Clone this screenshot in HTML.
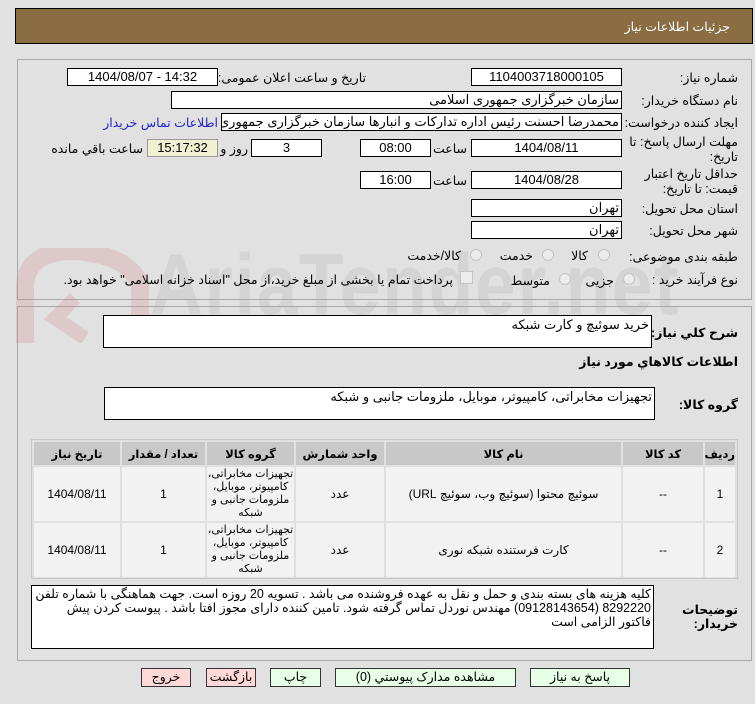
<!DOCTYPE html>
<html><head><meta charset="utf-8"><style>
body{margin:0;width:755px;height:704px;background:#e1e1e1;font-family:"Liberation Sans","DejaVu Sans",sans-serif;font-size:12px;position:relative;overflow:hidden;color:#000}
.a{position:absolute}
.hdr{left:15px;top:8px;width:736px;height:34px;background:#8b6d43;border:1px solid #000;}
.hdr span{position:absolute;right:22px;top:10px;color:#fff;font-size:12.5px}
.pan{border:1px solid #a8a8a8;background:#e1e1e1}
.f{position:absolute;background:#fff;border:1px solid #000;height:16px;line-height:16px;text-align:center;font-size:13px;box-sizing:content-box;overflow:hidden;white-space:nowrap}
.r{text-align:right;padding-right:2px;direction:rtl}
.lb{position:absolute;right:17px;text-align:right;direction:rtl;font-size:12.5px}
.rad{position:absolute;width:10px;height:10px;border:1px solid #c4c4c4;border-radius:50%;background:#ececec}
.t{position:absolute;direction:rtl;white-space:nowrap;font-size:12.5px}
table{border-collapse:separate;border-spacing:2px;background:#e0e0e0;table-layout:fixed}
td,th{font-size:12px;text-align:center;direction:rtl;overflow:hidden;padding:0}
th{background:#c8c8c8;height:23px;font-weight:bold;font-size:11.5px;white-space:nowrap}
td{background:#f2f2f2;height:54px;line-height:13px}
td.g{font-size:11px;white-space:nowrap;line-height:13px}
.btn{position:absolute;top:668px;height:17px;border:1px solid #333;background:#e8ffe8;text-align:center;line-height:17px;font-size:12.5px}
.wm{position:absolute;left:150px;top:236px;font-size:86px;font-weight:bold;color:rgba(170,170,170,0.22);letter-spacing:2px;transform:scaleX(0.85);transform-origin:left;font-family:"Liberation Sans Narrow","Liberation Sans",sans-serif}
</style></head><body>
<div class="a hdr"><span>جزئیات اطلاعات نیاز</span></div>
<div class="a pan" style="left:17px;top:59px;width:733px;height:239px"></div>
<div class="a pan" style="left:17px;top:306px;width:733px;height:353px"></div>
<div class="wm">AriaTender.net</div>
<svg class="a" style="left:15px;top:248px" width="135" height="95" viewBox="0 0 135 95"><path d="M10 95 L10 40 Q10 5 55 3 Q110 5 125 35 L125 95" fill="none" stroke="rgba(210,130,130,0.25)" stroke-width="18"/><path d="M60 50 L40 70 L70 90" fill="none" stroke="rgba(210,130,130,0.25)" stroke-width="14"/></svg>

<div class="lb" style="top:70px">شماره نیاز:</div>
<div class="f" style="left:471px;top:68px;width:149px">1104003718000105</div>
<div class="t" style="right:389px;top:70px">تاریخ و ساعت اعلان عمومی:</div>
<div class="f" style="left:67px;top:68px;width:149px">1404/08/07 - 14:32</div>

<div class="lb" style="top:93px">نام دستگاه خریدار:</div>
<div class="f r" style="left:171px;top:91px;width:447px">سازمان خبرگزاری جمهوری اسلامی</div>

<div class="lb" style="top:115px">ایجاد کننده درخواست:</div>
<div class="f r" style="left:221px;top:113px;width:397px">محمدرضا احسنت رئیس اداره تدارکات و انبارها سازمان خبرگزاری جمهوری اسلامی</div>
<div class="t" style="right:537px;top:115px;color:#2323d0">اطلاعات تماس خریدار</div>

<div class="lb" style="top:135px;line-height:15px">مهلت ارسال پاسخ: تا<br>تاریخ:</div>
<div class="f" style="left:471px;top:139px;width:149px">1404/08/11</div>
<div class="t" style="right:288px;top:141px">ساعت</div>
<div class="f" style="left:360px;top:139px;width:69px">08:00</div>
<div class="f" style="left:251px;top:139px;width:69px">3</div>
<div class="t" style="right:507px;top:141px">روز و</div>
<div class="f" style="left:147px;top:139px;width:69px;background:#f0f0d2;border-color:#999">15:17:32</div>
<div class="t" style="right:612px;top:141px">ساعت باقي مانده</div>

<div class="lb" style="top:167px;line-height:15px">حداقل تاریخ اعتبار<br>قیمت: تا تاریخ:</div>
<div class="f" style="left:471px;top:171px;width:149px">1404/08/28</div>
<div class="t" style="right:288px;top:173px">ساعت</div>
<div class="f" style="left:360px;top:171px;width:69px">16:00</div>

<div class="lb" style="top:201px">استان محل تحویل:</div>
<div class="f r" style="left:471px;top:199px;width:147px">تهران</div>
<div class="lb" style="top:223px">شهر محل تحویل:</div>
<div class="f r" style="left:471px;top:221px;width:147px">تهران</div>

<div class="lb" style="top:249px">طبقه بندی موضوعی:</div>
<div class="rad" style="left:598px;top:249px"></div><div class="t" style="right:167px;top:248px">کالا</div>
<div class="rad" style="left:542px;top:249px"></div><div class="t" style="right:222px;top:248px">خدمت</div>
<div class="rad" style="left:470px;top:249px"></div><div class="t" style="right:294px;top:248px">کالا/خدمت</div>

<div class="lb" style="top:272px">نوع فرآیند خرید :</div>
<div class="rad" style="left:623px;top:273px"></div><div class="t" style="right:141px;top:273px">جزیی</div>
<div class="rad" style="left:559px;top:273px"></div><div class="t" style="right:205px;top:273px">متوسط</div>
<div class="a" style="left:460px;top:271px;width:11px;height:11px;border:1px solid #c4c4c4;background:#ececec"></div>
<div class="t" style="right:302px;top:272px">پرداخت تمام یا بخشی از مبلغ خرید،از محل "اسناد خزانه اسلامی" خواهد بود.</div>

<div class="lb" style="top:325px;font-weight:bold">شرح کلي نیاز:</div>
<div class="f r" style="left:103px;top:315px;width:545px;height:31px;text-align:right;line-height:18px">خرید سوئیچ و کارت شبکه</div>
<div class="lb" style="top:354px;font-weight:bold">اطلاعات کالاهاي مورد نیاز</div>
<div class="lb" style="top:397px;font-weight:bold">گروه کالا:</div>
<div class="f r" style="left:104px;top:387px;width:547px;height:31px;text-align:right;line-height:18px">تجهیزات مخابراتی، کامپیوتر، موبایل، ملزومات جانبی و شبکه</div>

<div class="a" style="left:31px;top:439px;width:705px;height:138px;border:1px solid #c8c8c8;background:#e0e0e0;overflow:hidden">
<table style="width:705px;direction:rtl">
<colgroup><col style="width:30px"><col style="width:80px"><col style="width:235px"><col style="width:88px"><col style="width:87px"><col style="width:83px"><col></colgroup>
<tr><th>ردیف</th><th>کد کالا</th><th>نام کالا</th><th>واحد شمارش</th><th>گروه کالا</th><th>تعداد / مقدار</th><th>تاریخ نیاز</th></tr>
<tr><td>1</td><td>--</td><td>سوئیچ محتوا (سوئیچ وب، سوئیچ URL)</td><td>عدد</td><td class="g">تجهیزات مخابراتی،<br>کامپیوتر، موبایل،<br>ملزومات جانبی و<br>شبکه</td><td>1</td><td>1404/08/11</td></tr>
<tr><td>2</td><td>--</td><td>کارت فرستنده شبکه نوری</td><td>عدد</td><td class="g">تجهیزات مخابراتی،<br>کامپیوتر، موبایل،<br>ملزومات جانبی و<br>شبکه</td><td>1</td><td>1404/08/11</td></tr>
</table></div>

<div class="lb" style="top:603px;font-weight:bold;line-height:14px">توضیحات<br>خریدار:</div>
<div class="f r" style="left:31px;top:585px;width:617px;height:60px;text-align:right;line-height:14px;white-space:normal;padding:1px 2px;font-size:12.5px">کلیه هزینه های بسته بندی و حمل و نقل به عهده فروشنده می باشد . تسویه 20 روزه است. جهت هماهنگی با شماره تلفن 8292220 (09128143654) مهندس نوردل تماس گرفته شود. تامین کننده دارای مجوز افتا باشد . پیوست کردن پیش فاکتور الزامی است</div>

<div class="btn" style="left:530px;width:98px">پاسخ به نیاز</div>
<div class="btn" style="left:335px;width:179px">مشاهده مدارک پیوستي (0)</div>
<div class="btn" style="left:270px;width:49px">چاپ</div>
<div class="btn" style="left:206px;width:48px;background:#ffd8d8">بازگشت</div>
<div class="btn" style="left:141px;width:48px;background:#ffd8d8">خروج</div>
</body></html>
